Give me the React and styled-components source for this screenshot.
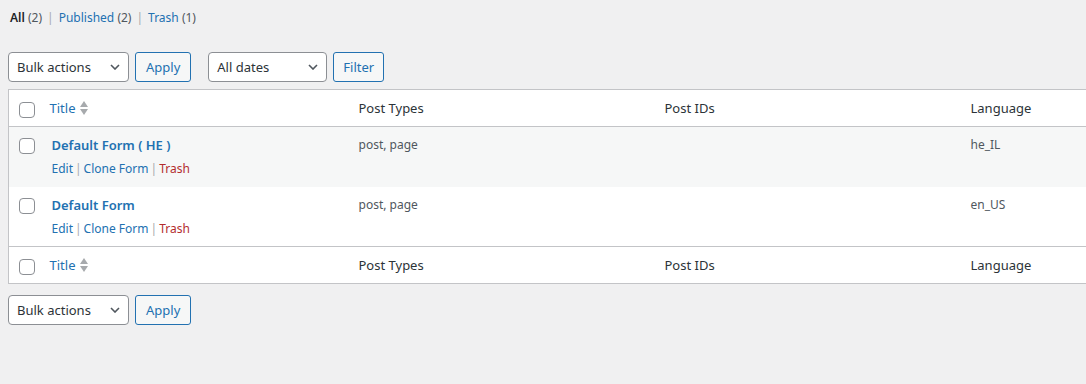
import React from "react";
import styled, { createGlobalStyle } from "styled-components";

const GlobalStyle = createGlobalStyle`
  html, body {
    margin: 0;
    padding: 0;
    background: #f0f0f1;
    overflow: hidden;
  }
  body {
    font-family: "Noto Sans", "Open Sans", sans-serif;
    font-size: 12px;
    color: #3c434a;
  }
`;

const forms = [
  { id: 1, title: "Default Form ( HE )", types: "post, page", ids: "", lang: "he_IL" },
  { id: 2, title: "Default Form", types: "post, page", ids: "", lang: "en_US" },
];

// select with chevron
const Chevron = () => (
  <svg width="10" height="6" viewBox="0 0 10 6">
    <path d="M1 1l4 4 4-4" fill="none" stroke="#50575e" strokeWidth="1.6" />
  </svg>
);

const SortArrows = () => (
  <svg width="8" height="16" viewBox="0 0 8 16">
    <path d="M4 1l4 6H0z" fill="#a7aaad" />
    <path d="M4 15l4-6H0z" fill="#a7aaad" />
  </svg>
);

const Dropdown = ({ label, width }) => (
  <Select $width={width}>
    <span>{label}</span>
    <Chevron />
  </Select>
);

const Toolbar = ({ withFilter, bottom }) => (
  <Nav $bottom={bottom}>
    <Dropdown label="Bulk actions" width={121} />
    <Button>Apply</Button>
    {withFilter && (
      <>
        <Spacer />
        <Dropdown label="All dates" width={119} />
        <Button $narrow>Filter</Button>
      </>
    )}
  </Nav>
);

const HeadRow = ({ bottom }) => (
  <tr>
    <Th $check $bottom={bottom}>
      <Check />
    </Th>
    <Th $bottom={bottom}>
      <SortLink>
        Title
        <SortArrows />
      </SortLink>
    </Th>
    <Th $bottom={bottom}>Post Types</Th>
    <Th $bottom={bottom}>Post IDs</Th>
    <Th $bottom={bottom}>Language</Th>
  </tr>
);

const App = () => {
  return (
    <Page>
      <GlobalStyle />
      <Views>
        <Current>All</Current> <Count>(2)</Count>
        <Sep>|</Sep>
        <ViewLink>Published</ViewLink> <Count>(2)</Count>
        <Sep>|</Sep>
        <ViewLink>Trash</ViewLink> <Count>(1)</Count>
      </Views>

      <Toolbar withFilter />

      <Table>
        <colgroup>
          <col style={{ width: 31 }} />
          <col style={{ width: 309 }} />
          <col style={{ width: 306 }} />
          <col style={{ width: 306 }} />
          <col style={{ width: 306 }} />
        </colgroup>
        <thead>
          <HeadRow />
        </thead>
        <tbody>
          {forms.map((f, i) => (
            <Row key={f.id} $alt={i % 2 === 0}>
              <Td $check>
                <Check />
              </Td>
              <Td $title>
                <RowTitle>{f.title}</RowTitle>
                <Actions>
                  <ActionLink>Edit</ActionLink>
                  <Sep $small>|</Sep>
                  <ActionLink>Clone Form</ActionLink>
                  <Sep $small>|</Sep>
                  <ActionLink $danger>Trash</ActionLink>
                </Actions>
              </Td>
              <Td>{f.types}</Td>
              <Td>{f.ids}</Td>
              <Td>{f.lang}</Td>
            </Row>
          ))}
        </tbody>
        <tfoot>
          <HeadRow bottom />
        </tfoot>
      </Table>

      <Toolbar bottom />
    </Page>
  );
};

export default App;

const Page = styled.div`
  padding-left: 8px;
  width: 1400px;
`;

const Views = styled.div`
  padding-top: 5px;
  padding-left: 2px;
  line-height: 26px;
  height: 26px;
  font-size: 12px;
  color: #50575e;
`;
const Current = styled.span`
  font-weight: 600;
  color: #1d2327;
`;
const Count = styled.span`
  color: #50575e;
`;
const ViewLink = styled.span`
  color: #2271b1;
`;
const Sep = styled.span`
  color: #a7aaad;
  margin: 0 ${(props) => (props.$small ? "2px" : "5px")};
`;

const Nav = styled.div`
  display: flex;
  align-items: center;
  height: 30px;
  margin-top: ${(props) => (props.$bottom ? "11px" : "21px")};
  margin-bottom: 7px;
`;
const Spacer = styled.div`
  width: 17px;
`;
const Select = styled.div`
  box-sizing: border-box;
  display: flex;
  align-items: center;
  justify-content: space-between;
  width: ${(props) => props.$width}px;
  height: 30px;
  padding: 0 8px 0 8px;
  margin-right: 6px;
  background: #fff;
  border: 1px solid #8c8f94;
  border-radius: 4px;
  font-size: 13px;
  color: #2c3338;
`;
const Button = styled.div`
  box-sizing: border-box;
  display: flex;
  align-items: center;
  height: 30px;
  padding: 0 ${(props) => (props.$narrow ? "9px" : "10px")};
  background: #f6f7f7;
  border: 1px solid #2271b1;
  border-radius: 3px;
  color: #2271b1;
  font-size: 13px;
`;

const Table = styled.table`
  table-layout: fixed;
  border-collapse: collapse;
  width: 1259px;
  background: #fff;
  border: 1px solid #c3c4c7;
`;
const Th = styled.th`
  box-sizing: border-box;
  height: 37px;
  padding: 0 0 0 10px;
  text-align: left;
  font-weight: 400;
  font-size: 13px;
  color: #2c3338;
  vertical-align: middle;
  border-bottom: ${(props) => (props.$bottom ? "none" : "1px solid #c3c4c7")};
  border-top: ${(props) => (props.$bottom ? "1px solid #c3c4c7" : "none")};
  ${(props) => props.$check && "padding: 3px 0 0 10px;"}
`;
const SortLink = styled.span`
  display: inline-flex;
  align-items: center;
  gap: 5px;
  color: #2271b1;
`;
const Row = styled.tr`
  background: ${(props) => (props.$alt ? "#f6f7f7" : "#fff")};
`;
const Td = styled.td`
  height: 60px;
  box-sizing: border-box;
  padding: ${(props) => (props.$check ? "11px 0 0 10px" : "8px 10px")};
  padding-left: ${(props) => (props.$title ? "12px" : "10px")};
  vertical-align: top;
  font-size: 12px;
  line-height: 19px;
  color: #50575e;
`;
const RowTitle = styled.div`
  font-weight: 600;
  font-size: 13px;
  line-height: 20px;
  color: #2271b1;
`;
const Actions = styled.div`
  padding-top: 4px;
  font-size: 12px;
  line-height: 19px;
  color: #a7aaad;
`;
const ActionLink = styled.span`
  color: ${(props) => (props.$danger ? "#b32d2e" : "#2271b1")};
`;
const Check = styled.span`
  display: block;
  box-sizing: border-box;
  width: 16px;
  height: 16px;
  background: #fff;
  border: 1px solid #8c8f94;
  border-radius: 4px;
`;
